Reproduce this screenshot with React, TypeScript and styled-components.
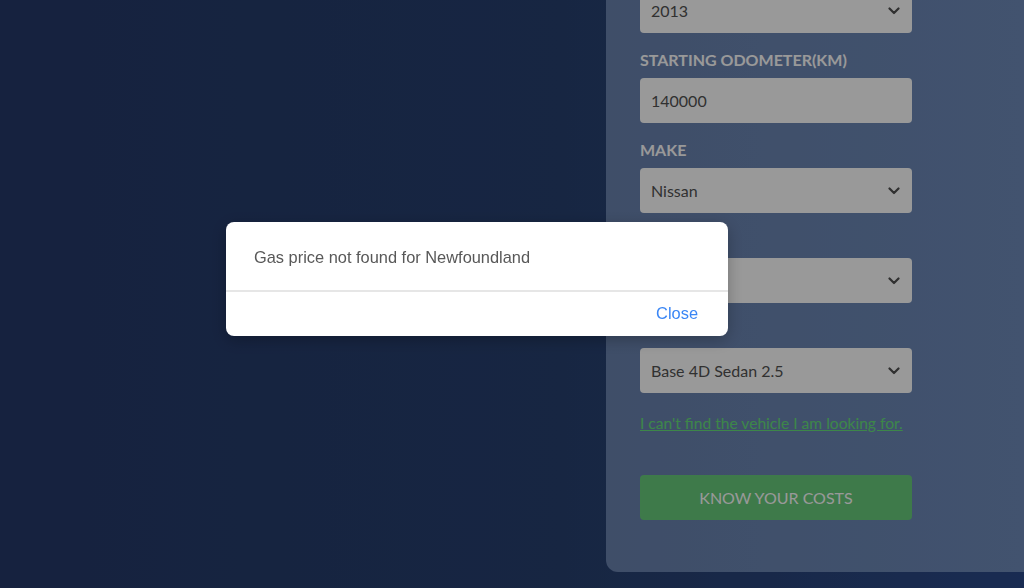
import React from 'react'
import styled, { createGlobalStyle } from 'styled-components'

const GlobalStyle = createGlobalStyle`
    html, body {
        margin: 0;
        padding: 0;
        height: 100%;
        overflow: hidden;
    }
    #root {
        height: 100%;
    }
`

const Page = styled.div`
    height: 588px;
    overflow: hidden;
    background: linear-gradient(to right, #253969 0%, #27406f 55%, #2b4989 100%);
    font-family: Lato, 'Open Sans', sans-serif;
    display: flex;
`

const FormPanel = styled.div`
    margin-left: 606px;
    margin-top: -70px;
    width: 460px;
    height: 642px;
    box-sizing: border-box;
    padding: 30px 34px 0;
    border-radius: 0 0 0 12px;
    background: linear-gradient(to right, #6982ae, #6e8ab9);
    display: flex;
    flex-direction: column;
`

const Field = styled.div`
    display: flex;
    flex-direction: column;
    width: 272px;
    margin-bottom: 17px;
`

const Label = styled.label`
    color: #ffffff;
    font-weight: 700;
    font-size: 16px;
    line-height: 20px;
    text-transform: uppercase;
    margin-bottom: 8px;
`

const InputBox = styled.div`
    height: 45px;
    box-sizing: border-box;
    background: #ffffff;
    border-radius: 4px;
    display: flex;
    align-items: center;
    justify-content: space-between;
    padding: 0 12px 0 11px;
    color: #525252;
    font-size: 16px;
`

const Chevron = () => (
    <svg width="12" height="8" viewBox="0 0 12 8">
        <path d="M1.5 1.5 L6 6 L10.5 1.5" fill="none" stroke="#505050" strokeWidth="2.2" strokeLinecap="round" strokeLinejoin="round" />
    </svg>
)

const HelpLink = styled.a`
    color: #66e07b;
    font-size: 15.6px;
    line-height: 20px;
    text-decoration: underline;
    margin-top: 3px;
    width: fit-content;
`

const SubmitButton = styled.button`
    margin-top: 42px;
    width: 272px;
    height: 45px;
    border: none;
    border-radius: 4px;
    background: #68cb7c;
    color: #ffffff;
    font-family: Lato, sans-serif;
    font-size: 16px;
    text-transform: uppercase;
`

const Backdrop = styled.div`
    position: fixed;
    inset: 0;
    background: rgba(0, 0, 0, 0.4);
    display: flex;
    align-items: flex-start;
    padding: 222px 0 0 226px;
`

const Dialog = styled.div`
    width: 502px;
    background: #ffffff;
    border-radius: 8px;
    box-shadow: 0 4px 16px rgba(0, 0, 0, 0.25);
    font-family: 'Liberation Sans', Arial, sans-serif;
    overflow: hidden;
`

const DialogBody = styled.div`
    height: 66px;
    display: flex;
    align-items: center;
    padding: 2px 28px 0;
    color: #585858;
    font-size: 16.4px;
    border-bottom: 2px solid #e6e6e6;
`

const DialogFooter = styled.div`
    height: 44px;
    display: flex;
    align-items: center;
    justify-content: flex-end;
    padding: 0 30px;
`

const CloseButton = styled.button`
    border: none;
    background: none;
    padding: 0 0 2px;
    font-family: 'Liberation Sans', Arial, sans-serif;
    font-size: 16.4px;
    color: #3a86f5;
`

const fields = [
    { label: 'Year', value: '2013', select: true },
    { label: 'Starting Odometer(km)', value: '140000', select: false },
    { label: 'Make', value: 'Nissan', select: true },
    { label: 'Model', value: 'Altima', select: true },
    { label: 'Trim', value: 'Base 4D Sedan 2.5', select: true },
]

const App = () => (
    <>
        <GlobalStyle />
        <Page>
            <FormPanel>
                {fields.map((f) => (
                    <Field key={f.label}>
                        <Label>{f.label}</Label>
                        <InputBox>
                            <span>{f.value}</span>
                            {f.select && <Chevron />}
                        </InputBox>
                    </Field>
                ))}
                <HelpLink href="#">I can't find the vehicle I am looking for.</HelpLink>
                <SubmitButton>Know your costs</SubmitButton>
            </FormPanel>
        </Page>
        <Backdrop>
            <Dialog>
                <DialogBody>Gas price not found for Newfoundland</DialogBody>
                <DialogFooter>
                    <CloseButton>Close</CloseButton>
                </DialogFooter>
            </Dialog>
        </Backdrop>
    </>
)

export default App
